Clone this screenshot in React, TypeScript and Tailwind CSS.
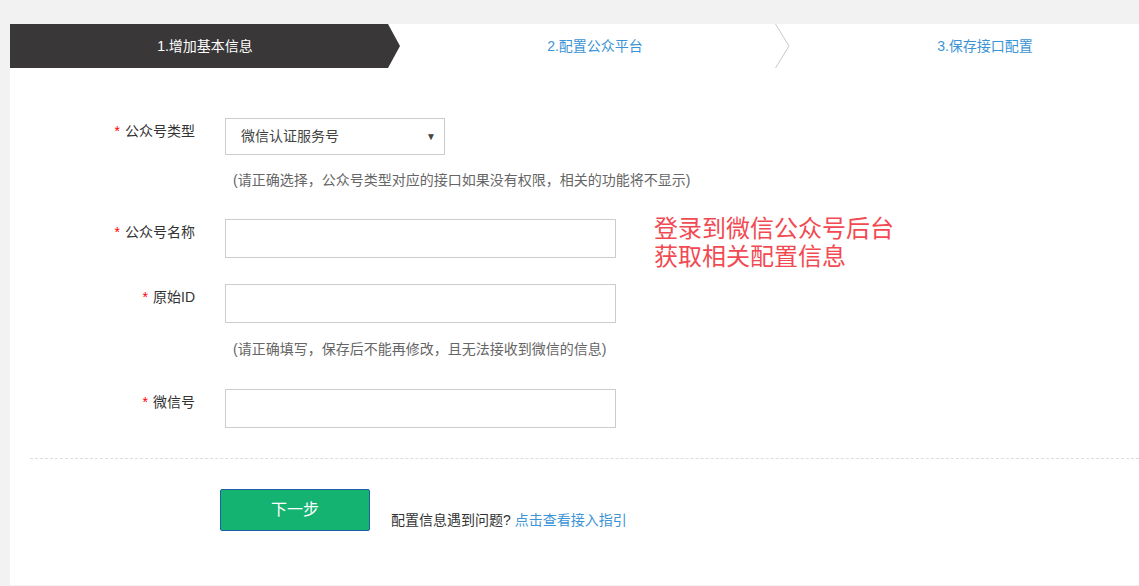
import React from 'react';

const font = "font-['Liberation_Sans','Noto_Sans_CJK_SC',sans-serif]";

const Label = ({ text }: { text: string }) => (
  <div className="w-[185px] shrink-0 pt-[3px] text-right text-[14px] leading-[20px] text-[#333]">
    <span className="mr-[5px] text-[14px] text-[#f00]">*</span>
    {text}
  </div>
);

const Hint = ({ text }: { text: string }) => (
  <div className="ml-[223px] text-[14px] leading-[20px] text-[#666]">{text}</div>
);

export default function App() {
  return (
    <div className={`min-h-screen bg-[#f2f2f2] pl-[10px] pt-[24px] ${font}`}>
      <div className="h-[561px] overflow-hidden bg-white">
        {/* Steps */}
        <div className="flex h-[44px]">
          <div className="flex w-[390px] shrink-0 items-center justify-center bg-[#393737] text-[14px] text-white [clip-path:polygon(0_0,378px_0,390px_50%,378px_100%,0_100%)]">
            1.增加基本信息
          </div>
          <div className="relative flex w-[390px] shrink-0 items-center justify-center text-[14px] text-[#3c94d6]">
            2.配置公众平台
            <svg className="absolute right-0 top-0" width="15" height="44" viewBox="0 0 15 44">
              <path d="M0.5 0 L14 22 L0.5 44" fill="none" stroke="#c8c8c8" strokeWidth="1" />
            </svg>
          </div>
          <div className="flex w-[390px] shrink-0 items-center justify-center text-[14px] text-[#3c94d6]">
            3.保存接口配置
          </div>
        </div>

        {/* Form */}
        <div className="pt-[50px]">
          <div className="flex">
            <Label text="公众号类型" />
            <div className="ml-[30px] flex h-[37px] w-[220px] items-center justify-between border border-[#ccc] pl-[15px] pr-[8px] text-[14px] text-[#444]">
              <span>微信认证服务号</span>
              <span className="text-[10px] text-[#444]">▼</span>
            </div>
          </div>
          <div className="mt-[15px]">
            <Hint text="(请正确选择，公众号类型对应的接口如果没有权限，相关的功能将不显示)" />
          </div>

          <div className="relative mt-[29px] flex">
            <Label text="公众号名称" />
            <div className="ml-[30px] h-[39px] w-[391px] border border-[#ccc]" />
            <div className="absolute left-[644px] top-[-4px] text-[24px] leading-[28px] text-[#f24a52]">
              <div>登录到微信公众号后台</div>
              <div>获取相关配置信息</div>
            </div>
          </div>

          <div className="mt-[26px] flex">
            <Label text="原始ID" />
            <div className="ml-[30px] h-[39px] w-[391px] border border-[#ccc]" />
          </div>
          <div className="mt-[16px]">
            <Hint text="(请正确填写，保存后不能再修改，且无法接收到微信的信息)" />
          </div>

          <div className="mt-[30px] flex">
            <Label text="微信号" />
            <div className="ml-[30px] h-[39px] w-[391px] border border-[#ccc]" />
          </div>

          <div className="ml-[20px] mt-[30px] border-t border-dashed border-[#ddd]" />

          <div className="ml-[210px] mt-[30px] flex items-end">
            <button className="flex h-[42px] w-[150px] items-center justify-center rounded-[2px] border border-[#1d5fa5] bg-[#15b371] text-[16px] text-white">
              下一步
            </button>
            <div className="mb-[1px] ml-[21px] text-[14px] leading-[20px] text-[#333]">
              配置信息遇到问题? <span className="text-[#3c94d6]">点击查看接入指引</span>
            </div>
          </div>
        </div>
      </div>
    </div>
  );
}
